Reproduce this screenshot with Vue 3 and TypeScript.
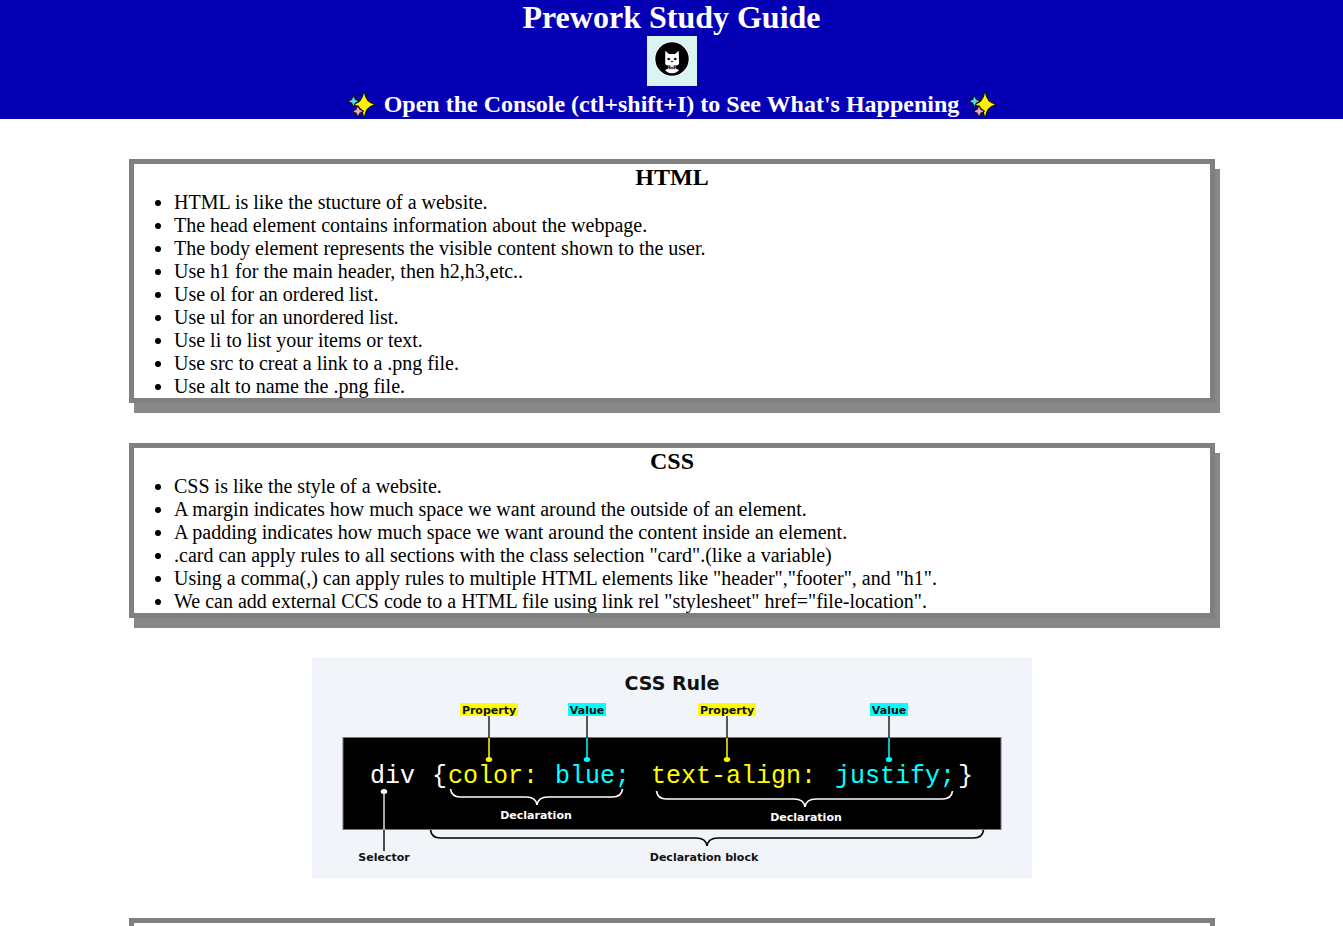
<script setup lang="ts">
interface Card {
  title: string
  notes: string[]
}

const cards: Card[] = [
  {
    title: 'HTML',
    notes: [
      'HTML is like the stucture of a website.',
      'The head element contains information about the webpage.',
      'The body element represents the visible content shown to the user.',
      'Use h1 for the main header, then h2,h3,etc..',
      'Use ol for an ordered list.',
      'Use ul for an unordered list.',
      'Use li to list your items or text.',
      'Use src to creat a link to a .png file.',
      'Use alt to name the .png file.',
    ],
  },
  {
    title: 'CSS',
    notes: [
      'CSS is like the style of a website.',
      'A margin indicates how much space we want around the outside of an element.',
      'A padding indicates how much space we want around the content inside an element.',
      '.card can apply rules to all sections with the class selection "card".(like a variable)',
      'Using a comma(,) can apply rules to multiple HTML elements like "header","footer", and "h1".',
      'We can add external CCS code to a HTML file using link rel "stylesheet" href="file-location".',
    ],
  },
]

const pointers = [
  { x: 177, label: 'Property', kind: 'property', width: 58 },
  { x: 275, label: 'Value', kind: 'value', width: 38 },
  { x: 415, label: 'Property', kind: 'property', width: 58 },
  { x: 577, label: 'Value', kind: 'value', width: 38 },
]

const tokens = [
  { x: 58, text: 'div', kind: 'plain' },
  { x: 120, text: '{', kind: 'plain' },
  { x: 136, text: 'color:', kind: 'property' },
  { x: 243, text: 'blue;', kind: 'value' },
  { x: 339, text: 'text-align:', kind: 'property' },
  { x: 523, text: 'justify;', kind: 'value' },
  { x: 646, text: '}', kind: 'plain' },
]
</script>

<template>
  <header class="banner">
    <h1>Prework Study Guide</h1>
    <svg class="logo" viewBox="0 0 50 50" role="img" aria-label="Cat logo">
      <rect width="50" height="50" fill="#d8f5f2" />
      <circle cx="25" cy="23" r="17.7" fill="#fff" />
      <circle cx="25" cy="23" r="16.7" fill="#000" />
      <path d="M18.300 14.800 22 18h6l3.700-3.200.4 12.700q-.4 2-3 2h-8.200q-2.400 0-2.700-2z" fill="#fff" />
      <circle cx="21.700" cy="23" r="1.300" fill="#000" />
      <circle cx="28.300" cy="23" r="1.300" fill="#000" />
      <path d="M23.600 25h2.800L25 26.400z" fill="#000" />
      <path d="M23.200 29h3.600v2h-3.600z" fill="#ddd" />
      <path d="M18 34.500q2-2.500 5-2.500l2 1.500 2-1.500q3 0 5 2.500-3 2.700-7 2.700t-7-2.700z" fill="#fff" />
      <path d="m21.500 30.500 3.500 1.500 3.500-1.500v3L25 32.500l-3.500 1z" fill="#222" stroke="#fff" stroke-width=".4" />
    </svg>
    <h2>
      <svg v-for="side in ['left', 'right']" :key="side" class="sparkles" :class="side" viewBox="0 0 28 28" aria-hidden="true">
        <g stroke="#111" stroke-width="2.200" stroke-linejoin="round" paint-order="stroke">
          <path d="M17 2q1.600 9.400 10 11.500-8.400 2.100-10 12-1.600-9.900-10-12Q15.400 11.400 17 2z" fill="#fff100" />
          <path d="M6.500 5.500 8 8.700l3.200 1.500L8 11.700l-1.500 3.200L5 11.700l-3.200-1.500L5 8.700z" fill="#50d8f4" />
          <path d="m11 15.500 1.500 3.200 3.200 1.500-3.200 1.500-1.500 3.200-1.500-3.200-3.200-1.500 3.200-1.500z" fill="#f7a0c4" />
        </g>
      </svg>
      <span>Open the Console (ctl+shift+I) to See What's Happening</span>
    </h2>
  </header>

  <main>
    <section v-for="card in cards" :key="card.title" class="card">
      <h2>{{ card.title }}</h2>
      <ul>
        <li v-for="note in card.notes" :key="note">{{ note }}</li>
      </ul>
    </section>

    <svg class="diagram" viewBox="0 0 720 220" role="img" aria-label="Parts of a CSS rule">
      <rect width="720" height="220" fill="#f1f5fa" />
      <text class="heading" x="360" y="32">CSS Rule</text>
      <rect x="31" y="79.500" width="658" height="92" fill="#000" stroke="#777" stroke-width="1" />

      <g v-for="p in pointers" :key="p.x" :class="p.kind">
        <rect :x="p.x - p.width / 2" y="45" :width="p.width" height="13" fill="currentColor" />
        <path :d="`M${p.x} 58v22`" stroke="#222" stroke-width="1.500" />
        <path :d="`M${p.x} 80v21`" stroke="currentColor" stroke-width="1.500" />
        <ellipse :cx="p.x" cy="101.500" rx="3.200" ry="2.500" fill="currentColor" />
        <text class="label" :x="p.x" y="56">{{ p.label }}</text>
      </g>

      <text v-for="t in tokens" :key="t.x" class="code" :class="t.kind" :x="t.x" y="125">{{ t.text }}</text>

      <ellipse cx="72" cy="133.500" rx="3.200" ry="2.500" fill="#fff" />
      <path d="M72 134v38" stroke="#ddd" stroke-width="1.500" />
      <path d="M72 172v21" stroke="#111" stroke-width="1.500" />
      <g fill="none" stroke-width="1.700">
        <path d="M138.500 131q1 8 10 8H214q10 0 11 8 1-8 11-8h64.500q9 0 10-8" stroke="#fff" />
        <path d="M344.500 133q1 8 10 8H482q10 0 11 8 1-8 11-8h126.500q9 0 10-8" stroke="#fff" />
        <path d="M118.500 172q1 8 10 8H384q10 0 11 8 1-8 11-8h255.500q9 0 10-8" stroke="#000" />
      </g>
      <text class="label light" x="224" y="161">Declaration</text>
      <text class="label light" x="494" y="163">Declaration</text>
      <text class="label" x="72" y="203">Selector</text>
      <text class="label" x="392" y="203">Declaration block</text>
    </svg>

    <section class="card" aria-label="Next topic"></section>
  </main>
</template>

<style>
body {
  margin: 0;
  height: 100vh;
  overflow: hidden;
  background: #fff;
}
</style>

<style scoped>
.banner,
main {
  font-family: "Liberation Serif", "Times New Roman", serif;
}

h1,
h2,
ul {
  margin: 0;
}

h1 {
  margin-bottom: 2px;
  font-size: 32px;
  line-height: 34px;
}

.banner {
  display: flex;
  flex-direction: column;
  align-items: center;
  color: #fff;
  background: #0500b4;
}

.logo {
  width: 50px;
  height: 50px;
  margin-bottom: 4px;
}

.banner h2 {
  display: flex;
  align-items: center;
  gap: 9px;
  font-size: 24px;
  line-height: 29px;
}

.sparkles {
  width: 28px;
  height: 28px;
}

.right {
  order: 1;
}

main {
  display: flex;
  flex-direction: column;
  gap: 40px;
  padding: 40px 128px 40px 129px;
}

.card {
  border: 5px solid #808080;
  box-shadow: 5px 10px #888;
  min-height: 60px;
}

.card h2 {
  font-size: 24px;
  line-height: 27px;
  text-align: center;
}

ul {
  padding-left: 40px;
  font-size: 20px;
  line-height: 23px;
}

.diagram {
  display: block;
  width: 100%;
  max-width: 720px;
  align-self: center;
}

.heading,
.label {
  font-family: "DejaVu Sans", sans-serif;
  font-weight: 700;
  text-anchor: middle;
  fill: #111;
}

.heading {
  font-size: 19px;
}

.label {
  font-size: 11px;
}

.light {
  fill: #fff;
}

.code {
  font-family: "Liberation Mono", monospace;
  font-size: 25px;
  fill: currentColor;
}

.plain {
  color: #fff;
}

.property {
  color: #ff0;
}

.value {
  color: #0ff;
}
</style>
